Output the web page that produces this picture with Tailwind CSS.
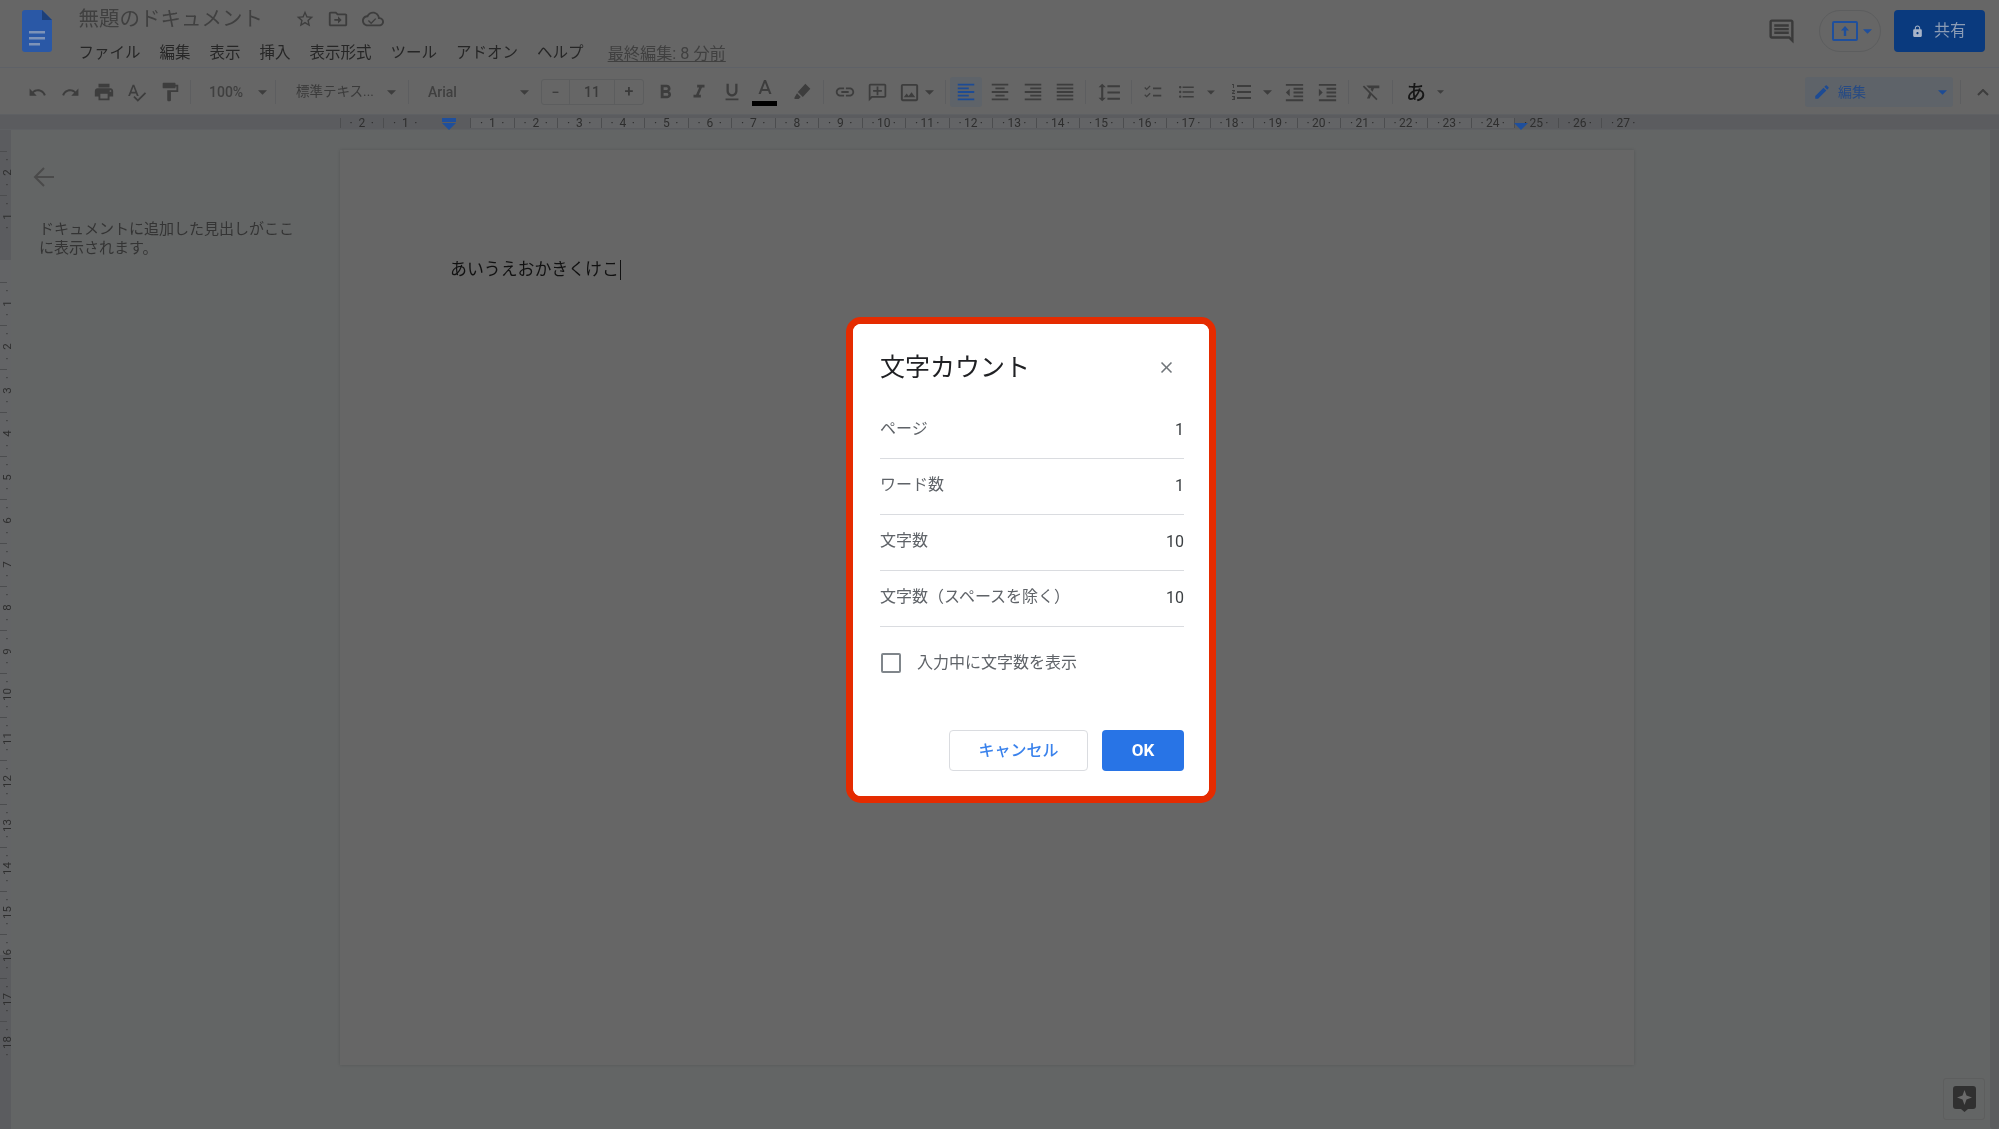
<!DOCTYPE html>
<html lang="ja">
<head>
<meta charset="utf-8">
<title>無題のドキュメント</title>
<script src="https://cdn.jsdelivr.net/npm/@tailwindcss/browser@4"></script>
</head>
<body class="m-0 overflow-hidden bg-[#636565]">
<div class="relative flex h-[1129px] w-[1999px] flex-col overflow-hidden bg-[#666666] font-['Roboto','Noto_Sans_CJK_JP',sans-serif] text-[#333333] blur-[0.4px]">

  <!-- Title bar -->
  <header class="flex h-[68px] shrink-0 items-start border-b border-[#5e6167]">
    <svg class="ml-[22px] mt-[10px] h-[42px] w-[30px] shrink-0" viewBox="0 0 30 42"><path fill="#2a58a6" d="M3 0h17l10 10v29a3 3 0 0 1-3 3H3a3 3 0 0 1-3-3V3a3 3 0 0 1 3-3z"/><path fill="#1d4079" d="M20 0l10 10H20z"/><path fill="#7d93b8" d="M7 21h16v2.4H7zm0 6h16v2.4H7zm0 6h11v2.4H7z"/></svg>
    <div class="ml-[26.5px] flex flex-col">
      <div class="flex h-[38px] items-center">
        <span class="text-[20.5px] leading-none text-[#404040]">無題のドキュメント</span>
        <svg class="ml-[31.5px] h-[20px] w-[20px]" viewBox="0 0 24 24" fill="#3d3d3d"><path d="M22 9.24l-7.19-.62L12 2 9.19 8.63 2 9.24l5.46 4.73L5.82 21 12 17.27 18.18 21l-1.63-7.03L22 9.24zM12 15.4l-3.76 2.27 1-4.28-3.32-2.88 4.38-.38L12 6.1l1.71 4.04 4.38.38-3.32 2.88 1 4.28L12 15.4z"/></svg>
        <svg class="ml-[12px] h-[22px] w-[22px]" viewBox="0 0 24 24" fill="#3d3d3d"><path d="M20 6h-8l-2-2H4c-1.1 0-2 .9-2 2v12c0 1.1.9 2 2 2h16c1.1 0 2-.9 2-2V8c0-1.1-.9-2-2-2zm0 12H4V6h5.17l2 2H20v10zm-8-1l4-4-4-4v3H8v2h4v3z"/></svg>
        <svg class="ml-[13px] h-[22px] w-[22px]" viewBox="0 0 24 24" fill="#3d3d3d"><path d="M19.35 10.04C18.67 6.59 15.64 4 12 4 9.11 4 6.6 5.64 5.35 8.04 2.34 8.36 0 10.91 0 14c0 3.31 2.69 6 6 6h13c2.76 0 5-2.24 5-5 0-2.64-2.05-4.78-4.65-4.96zM19 18H6c-2.21 0-4-1.79-4-4s1.79-4 4-4h.71C7.37 7.69 9.48 6 12 6c3.04 0 5.5 2.46 5.5 5.5v.5H19c1.66 0 3 1.34 3 3s-1.34 3-3 3zm-9-2.5l-2.5-2.5-1.06 1.06L10 17.62l5.5-5.5-1.06-1.06L10 15.5z"/></svg>
      </div>
      <nav class="mt-[6px] flex h-[20px] items-center gap-[19px] whitespace-nowrap text-[15.5px] leading-none text-[#262626]">
        <span>ファイル</span><span>編集</span><span>表示</span><span>挿入</span><span>表示形式</span><span>ツール</span><span>アドオン</span><span>ヘルプ</span>
        <span class="ml-[5px] text-[16.2px] text-[#404040] underline underline-offset-2">最終編集: 8 分前</span>
      </nav>
    </div>
    <div class="ml-auto mr-[14px] mt-[10px] flex items-center">
      <svg class="mr-[23px] h-[29px] w-[29px]" viewBox="0 0 24 24" fill="#3a3a3a"><path d="M21.99 4c0-1.1-.89-2-1.99-2H4c-1.1 0-2 .9-2 2v12c0 1.1.9 2 2 2h14l4 4-.01-18zM20 4v13.17L18.83 16H4V4h16zM6 12h12v2H6zm0-3h12v2H6zm0-3h12v2H6z"/></svg>
      <div class="mr-[13px] flex h-[42px] w-[62px] items-center rounded-full border border-[#5c5d5e] pl-[12px]">
        <svg class="h-[20px] w-[26px]" viewBox="0 0 26 20"><rect x="1" y="1" width="24" height="18" rx="1" fill="none" stroke="#1f4f9c" stroke-width="2"/><path fill="#1f4f9c" d="M13 5l4 4.5h-2.8V15h-2.4V9.5H9z"/></svg>
        <svg class="ml-[5px] h-[5px] w-[9px]" viewBox="0 0 10 5"><path fill="#1f4f9c" d="M0 0h10L5 5z"/></svg>
      </div>
      <div class="flex h-[42px] w-[91px] items-center rounded-[4px] bg-[#0a3a7e] pl-[17px] text-[16px] text-[#8c9cb5]">
        <svg class="h-[15px] w-[13px]" viewBox="0 0 24 24" fill="#a8b4c8"><path d="M18 8h-1V6c0-2.76-2.24-5-5-5S7 3.24 7 6v2H6c-1.1 0-2 .9-2 2v10c0 1.1.9 2 2 2h12c1.1 0 2-.9 2-2V10c0-1.1-.9-2-2-2zm-6 9c-1.1 0-2-.9-2-2s.9-2 2-2 2 .9 2 2-.9 2-2 2zm3.1-9H8.9V6c0-1.71 1.39-3.1 3.1-3.1 1.71 0 3.1 1.39 3.1 3.1v2z"/></svg>
        <span class="ml-[10px]">共有</span>
      </div>
    </div>
  </header>

  <!-- Toolbar -->
  <div class="flex h-[46px] shrink-0 items-center pl-[21px] pt-[2px] text-[14px] font-medium leading-none text-[#3a3a3a] [&>i]:mx-[4px] [&>i]:h-[24px] [&>i]:w-px [&>i]:shrink-0 [&>i]:bg-[#5d5e60] [&>span]:flex [&>span]:h-[30px] [&>span]:w-[33px] [&>span]:shrink-0 [&>span]:items-center [&>span]:justify-center [&_svg]:fill-[#3d3d3d]">
    <span><svg class="h-[19px] w-[19px]" viewBox="0 0 24 24"><path d="M12.5 8c-2.65 0-5.05.99-6.9 2.6L2 7v9h9l-3.62-3.62c1.39-1.16 3.16-1.88 5.12-1.88 3.54 0 6.55 2.31 7.6 5.5l2.37-.78C21.08 11.03 17.15 8 12.5 8z"/></svg></span>
    <span><svg class="h-[19px] w-[19px]" viewBox="0 0 24 24"><path d="M18.4 10.6C16.55 8.99 14.15 8 11.5 8c-4.65 0-8.58 3.03-9.96 7.22L3.9 16c1.05-3.19 4.05-5.5 7.6-5.5 1.95 0 3.73.72 5.12 1.88L13 16h9V7l-3.6 3.6z"/></svg></span>
    <span><svg class="h-[22px] w-[22px]" viewBox="0 0 24 24"><path d="M19 8H5c-1.66 0-3 1.34-3 3v6h4v4h12v-4h4v-6c0-1.66-1.34-3-3-3zm-3 11H8v-5h8v5zm3-7c-.55 0-1-.45-1-1s.45-1 1-1 1 .45 1 1-.45 1-1 1zm-1-9H6v4h12V3z"/></svg></span>
    <span><svg class="h-[21px] w-[21px]" viewBox="0 0 24 24"><path d="M12.45 16h2.09L9.43 3H7.57L2.46 16h2.09l1.12-3h5.64l1.14 3zm-6.02-5L8.5 5.48 10.57 11H6.43zm15.16.59l-8.09 8.09L9.83 16l-1.41 1.41 5.09 5.09L23 13l-1.41-1.41z"/></svg></span>
    <span><svg class="h-[22px] w-[22px]" viewBox="0 0 24 24"><path d="M18 4V3c0-.55-.45-1-1-1H5c-.55 0-1 .45-1 1v4c0 .55.45 1 1 1h12c.55 0 1-.45 1-1V6h1v4H9v11c0 .55.45 1 1 1h2c.55 0 1-.45 1-1v-9h8V4h-3z"/></svg></span>
    <i></i>
    <div class="flex w-[76px] shrink-0 items-center pl-[14px]"><span class="text-[#3f3f3f]">100%</span><svg class="ml-[15px] h-[5px] w-[9px]" viewBox="0 0 10 5"><path d="M0 0h10L5 5z"/></svg></div>
    <i></i>
    <div class="flex w-[124px] shrink-0 items-center pl-[16px]"><span class="whitespace-nowrap text-[13.5px] font-normal text-[#3a3a3a]">標準テキス...</span><svg class="ml-auto mr-[8px] h-[5px] w-[9px]" viewBox="0 0 10 5"><path d="M0 0h10L5 5z"/></svg></div>
    <i></i>
    <div class="flex w-[128px] shrink-0 items-center pl-[15px]"><span class="text-[#3f3f3f]">Arial</span><svg class="ml-auto mr-[12px] h-[5px] w-[9px]" viewBox="0 0 10 5"><path d="M0 0h10L5 5z"/></svg></div>
    <div class="flex h-[26px] w-[103px] shrink-0 items-center rounded-[3px] border border-[#5c5d5e] text-center text-[14px]">
      <div class="w-[27px]">−</div><div class="h-full w-[46px] border-x border-[#5c5d5e] leading-[24px]">11</div><div class="w-[28px] text-[16px]">+</div>
    </div>
    <span class="ml-[5px]"><svg class="h-[23px] w-[23px]" viewBox="0 0 24 24"><path d="M15.6 10.79c.97-.67 1.65-1.77 1.65-2.79 0-2.26-1.75-4-4-4H7v14h7.04c2.09 0 3.71-1.7 3.71-3.79 0-1.52-.86-2.82-2.15-3.42zM10 6.5h3c.83 0 1.5.67 1.5 1.5s-.67 1.5-1.5 1.5h-3v-3zm3.5 9H10v-3h3.5c.83 0 1.5.67 1.5 1.5s-.67 1.5-1.5 1.5z"/></svg></span>
    <span><svg class="h-[22px] w-[22px]" viewBox="0 0 24 24"><path d="M10 4v3h2.21l-3.42 8H6v3h8v-3h-2.21l3.42-8H18V4z"/></svg></span>
    <span><svg class="h-[22px] w-[22px]" viewBox="0 0 24 24"><path d="M12 17c3.31 0 6-2.69 6-6V3h-2.5v8c0 1.93-1.57 3.5-3.5 3.5S8.5 12.93 8.5 11V3H6v8c0 3.31 2.69 6 6 6zm-7 2v2h14v-2H5z"/></svg></span>
    <span class="relative"><svg class="mb-[7px] h-[24px] w-[24px]" viewBox="0 0 24 24"><path d="M11 3L5.5 17h2.25l1.12-3h6.25l1.12 3h2.25L13 3h-2zm-1.38 9L12 5.67 14.38 12H9.62z"/></svg><b class="absolute bottom-[1px] left-[4px] h-[5px] w-[25px] bg-black"></b></span>
    <span class="ml-[4px]"><svg class="h-[20px] w-[20px]" viewBox="0 0 24 24"><path d="M16 2l6 6-9 10-6-6zM6 13.5l4.5 4.5-2.5 2.5H3v-2z"/></svg></span>
    <i class="!ml-[5px]"></i>
    <span><svg class="h-[22px] w-[22px]" viewBox="0 0 24 24"><path d="M3.9 12c0-1.71 1.39-3.1 3.1-3.1h4V7H7c-2.76 0-5 2.24-5 5s2.24 5 5 5h4v-1.9H7c-1.71 0-3.1-1.39-3.1-3.1zM8 13h8v-2H8v2zm9-6h-4v1.9h4c1.71 0 3.1 1.39 3.1 3.1s-1.39 3.1-3.1 3.1h-4V17h4c2.76 0 5-2.24 5-5s-2.24-5-5-5z"/></svg></span>
    <span><svg class="h-[21px] w-[21px] -scale-x-100" viewBox="0 0 24 24"><path d="M22 4c0-1.1-.9-2-2-2H4c-1.1 0-2 .9-2 2v12c0 1.1.9 2 2 2h14l4 4V4zm-2 13.17L18.83 16H4V4h16v13.17zM13 5h-2v4H7v2h4v4h2v-4h4V9h-4z"/></svg></span>
    <div class="flex w-[45px] shrink-0 items-center pl-[4px]"><svg class="h-[23px] w-[23px]" viewBox="0 0 24 24"><path d="M19 5v14H5V5h14m0-2H5c-1.1 0-2 .9-2 2v14c0 1.1.9 2 2 2h14c1.1 0 2-.9 2-2V5c0-1.1-.9-2-2-2zm-4.86 8.86l-3 3.87L9 13.14 6 17h12l-3.86-5.14z"/></svg><svg class="ml-[4px] h-[5px] w-[9px]" viewBox="0 0 10 5"><path d="M0 0h10L5 5z"/></svg></div>
    <i class="!ml-[6px]"></i>
    <span class="!w-[32px] rounded-[3px] bg-[#5e6369]"><svg class="!fill-[#1d4b94] h-[22px] w-[22px]" viewBox="0 0 24 24"><path d="M15 15H3v2h12v-2zm0-8H3v2h12V7zM3 13h18v-2H3v2zm0 8h18v-2H3v2zM3 3v2h18V3H3z"/></svg></span>
    <span class="ml-[1px]"><svg class="h-[22px] w-[22px]" viewBox="0 0 24 24"><path d="M7 15v2h10v-2H7zm-4 6h18v-2H3v2zm0-8h18v-2H3v2zm4-6v2h10V7H7zM3 3v2h18V3H3z"/></svg></span>
    <span><svg class="h-[22px] w-[22px]" viewBox="0 0 24 24"><path d="M3 21h18v-2H3v2zm6-4h12v-2H9v2zm-6-4h18v-2H3v2zm6-4h12V7H9v2zM3 3v2h18V3H3z"/></svg></span>
    <span class="-ml-[1px]"><svg class="h-[22px] w-[22px]" viewBox="0 0 24 24"><path d="M3 21h18v-2H3v2zm0-4h18v-2H3v2zm0-4h18v-2H3v2zm0-4h18V7H3v2zm0-6v2h18V3H3z"/></svg></span>
    <i></i>
    <span class="ml-[3px]"><svg class="h-[25px] w-[25px]" viewBox="0 0 24 24"><path d="M6 7h2.500L5 3.500 1.500 7H4v10H1.500L5 20.500 8.500 17H6V7zm4-2v2h12V5H10zm0 14h12v-2H10v2zm0-6h12v-2H10v2z"/></svg></span>
    <i class="!ml-[5px]"></i>
    <span><svg class="h-[22px] w-[22px]" viewBox="0 0 24 24"><path d="M3.500 6.500l1.600 1.600L8.400 4.800l1 1-4.300 4.300L2.500 7.500zM3.500 14.500l1.600 1.600 3.300-3.300 1 1-4.300 4.300-2.600-2.600zM12 7h9v2h-9zM12 15h9v2h-9z"/></svg></span>
    <div class="ml-[2px] flex w-[44px] shrink-0 items-center pl-[6px]"><svg class="h-[22px] w-[22px]" viewBox="0 0 24 24"><path d="M4 10.500c-.83 0-1.500.67-1.500 1.500s.67 1.500 1.500 1.500 1.500-.67 1.500-1.500-.67-1.500-1.500-1.500zm0-6c-.83 0-1.500.67-1.500 1.500S3.170 7.500 4 7.500 5.500 6.830 5.500 6 4.830 4.500 4 4.500zm0 12c-.83 0-1.500.68-1.500 1.500s.68 1.500 1.500 1.500 1.500-.68 1.500-1.500-.67-1.500-1.500-1.500zM7 19h14v-2H7v2zm0-6h14v-2H7v2zm0-8v2h14V5H7z"/></svg><svg class="ml-[11px] h-[5px] w-[9px]" viewBox="0 0 10 5"><path d="M0 0h10L5 5z"/></svg></div>
    <div class="ml-[15px] flex w-[44px] shrink-0 items-center"><svg class="h-[24px] w-[24px]" viewBox="0 0 24 24"><path d="M2 17h2v.5H3v1h1v.5H2v1h3v-4H2v1zm1-9h1V4H2v1h1v3zm-1 3h1.800L2 13.100v.900h3v-1H3.200L5 10.900V10H2v1zm5-6v2h14V5H7zm0 14h14v-2H7v2zm0-6h14v-2H7v2z"/></svg><svg class="ml-[9px] h-[5px] w-[9px]" viewBox="0 0 10 5"><path d="M0 0h10L5 5z"/></svg></div>
    <span class="ml-[4px]"><svg class="h-[23px] w-[23px]" viewBox="0 0 24 24"><path d="M11 17h10v-2H11v2zm-8-5l4 4V8l-4 4zm0 9h18v-2H3v2zM3 3v2h18V3H3zm8 6h10V7H11v2zm0 4h10v-2H11v2z"/></svg></span>
    <span><svg class="h-[23px] w-[23px]" viewBox="0 0 24 24"><path d="M3 21h18v-2H3v2zM3 8v8l4-4-4-4zm8 9h10v-2H11v2zM3 3v2h18V3H3zm8 6h10V7H11v2zm0 4h10v-2H11v2z"/></svg></span>
    <i></i>
    <span class="ml-[2px]"><svg class="h-[22px] w-[22px]" viewBox="0 0 24 24"><path d="M3.270 5L2 6.270l6.970 6.970L6.500 19h3l1.570-3.660L16.730 21 18 19.730 3.550 5.270 3.270 5zM6 5v.180L8.820 8h2.400l-.720 1.680 2.100 2.100L14.210 8H20V5H6z"/></svg></span>
    <i class="!ml-[4px]"></i>
    <div class="flex w-[54px] shrink-0 items-center pl-[9px]"><b class="font-['Noto_Sans_CJK_JP',sans-serif] text-[20px] font-medium text-[#161616]">あ</b><svg class="ml-[11px] h-[4px] w-[7px]" viewBox="0 0 10 5"><path d="M0 0h10L5 5z"/></svg></div>

    <div class="ml-auto flex h-[30px] w-[148px] shrink-0 items-center rounded-[3px] bg-[#5e6369] pl-[8px] font-normal text-[#254a85]">
      <svg class="!fill-[#1d4b94] h-[18px] w-[18px]" viewBox="0 0 24 24"><path d="M3 17.250V21h3.750L17.810 9.940l-3.750-3.750L3 17.250zM20.710 7.040c.39-.39.39-1.020 0-1.410l-2.340-2.340a.996.996 0 0 0-1.410 0l-1.830 1.830 3.750 3.750 1.830-1.830z"/></svg>
      <b class="ml-[7px] text-[14px] font-normal">編集</b>
      <svg class="!fill-[#1d4b94] ml-auto mr-[6px] h-[5px] w-[9px]" viewBox="0 0 10 5"><path d="M0 0h10L5 5z"/></svg>
    </div>
    <i class="!ml-[7px] !mr-0"></i>
    <svg class="ml-[16px] mr-[10px] h-[7px] w-[12px] !fill-none" viewBox="0 0 12 7"><path d="M1 6l5-5 5 5" fill="none" stroke="#3d3d3d" stroke-width="2"/></svg>
  </div>

  <!-- Horizontal ruler -->
  <div class="relative flex h-[16px] shrink-0 items-center border-y border-[#5e6063] bg-[#5b5c5f] pl-[339.5px] pt-[1px] text-[12px] leading-none text-[#2e2e2e] [&_i]:not-italic [&>span]:flex [&>span]:h-[10px] [&>span]:w-[43.5px] [&>span]:shrink-0 [&>span]:items-center [&>span]:justify-between [&>span]:border-l [&>span]:border-[#4c4d4f] [&>span]:px-[9px] [&>span:nth-child(n+4):nth-child(-n+27)]:bg-[#636466]">
    <span><i>·</i>2<i>·</i></span><span><i>·</i>1<i>·</i></span><span class="!border-transparent"></span>
    <span><i>·</i>1<i>·</i></span><span><i>·</i>2<i>·</i></span><span><i>·</i>3<i>·</i></span><span><i>·</i>4<i>·</i></span><span><i>·</i>5<i>·</i></span><span><i>·</i>6<i>·</i></span><span><i>·</i>7<i>·</i></span><span><i>·</i>8<i>·</i></span><span><i>·</i>9<i>·</i></span><span><i>·</i>10<i>·</i></span><span><i>·</i>11<i>·</i></span><span><i>·</i>12<i>·</i></span><span><i>·</i>13<i>·</i></span><span><i>·</i>14<i>·</i></span><span><i>·</i>15<i>·</i></span><span><i>·</i>16<i>·</i></span><span><i>·</i>17<i>·</i></span><span><i>·</i>18<i>·</i></span><span><i>·</i>19<i>·</i></span><span><i>·</i>20<i>·</i></span><span><i>·</i>21<i>·</i></span><span><i>·</i>22<i>·</i></span><span><i>·</i>23<i>·</i></span><span><i>·</i>24<i>·</i></span><span><i>·</i>25<i>·</i></span><span><i>·</i>26<i>·</i></span><span><i>·</i>27<i>·</i></span>
    <svg class="absolute left-[441px] top-[3px] h-[12px] w-[16px]" viewBox="0 0 16 12"><path fill="#1f4f9c" d="M1 0h14v4H1zM1 5h14l-7 7z"/></svg>
    <svg class="absolute left-[1514px] top-[8px] h-[7px] w-[14px]" viewBox="0 0 14 7"><path fill="#1f4f9c" d="M0 0h14l-7 7z"/></svg>
  </div>

  <!-- Canvas -->
  <div class="flex min-h-0 flex-1 bg-[#636565]">
    <div class="w-[11px] shrink-0 bg-[linear-gradient(#5b5c5f_130px,#636466_130px,#636466_825px,#5b5c5f_825px)]">
      <div class="mt-[21px] flex flex-col text-[11.5px] leading-[9px] text-[#2e2e2e] [&_b]:-rotate-90 [&_b]:font-normal [&_b]:whitespace-nowrap [&_i]:not-italic [&_i]:h-[9px] [&>span]:flex [&>span]:h-[43.5px] [&>span]:w-[14px] [&>span]:flex-col [&>span]:items-center [&>span]:justify-between [&>span]:bg-[linear-gradient(#4c4d4f,#4c4d4f)] [&>span]:bg-[length:7px_1px] [&>span]:bg-no-repeat [&>span]:py-[5px]">
        <span><i>·</i><b>2</b><i>·</i></span><span><i>·</i><b>1</b><i>·</i></span><span class="!bg-none"></span>
        <span><i>·</i><b>1</b><i>·</i></span><span><i>·</i><b>2</b><i>·</i></span><span><i>·</i><b>3</b><i>·</i></span><span><i>·</i><b>4</b><i>·</i></span><span><i>·</i><b>5</b><i>·</i></span><span><i>·</i><b>6</b><i>·</i></span><span><i>·</i><b>7</b><i>·</i></span><span><i>·</i><b>8</b><i>·</i></span><span><i>·</i><b>9</b><i>·</i></span><span><i>·</i><b>10</b><i>·</i></span><span><i>·</i><b>11</b><i>·</i></span><span><i>·</i><b>12</b><i>·</i></span><span><i>·</i><b>13</b><i>·</i></span><span><i>·</i><b>14</b><i>·</i></span><span><i>·</i><b>15</b><i>·</i></span><span><i>·</i><b>16</b><i>·</i></span><span><i>·</i><b>17</b><i>·</i></span><span><i>·</i><b>18</b><i>·</i></span>
      </div>
    </div>
    <aside class="w-[329px] shrink-0 pl-[22px] pt-[36px]">
      <svg class="h-[22px] w-[22px]" viewBox="0 0 22 22" fill="none" stroke="#4a4a4a" stroke-width="2"><path d="M21 11H3M11 2l-9 9 9 9"/></svg>
      <p class="ml-[6px] mt-[32px] w-[262px] text-[15px] leading-[19px] text-[#343434]">ドキュメントに追加した見出しがここに表示されます。</p>
    </aside>
    <main class="mt-[20px] h-[915px] w-[1294px] shrink-0 bg-[#666666] pl-[110px] pt-[108px] shadow-[0_0_3px_rgba(0,0,0,0.15)]">
      <p class="flex h-[24px] items-center text-[16.9px] text-[#111111]">あいうえおかきくけこ<b class="ml-[1px] h-[20px] w-px bg-[#111111]"></b></p>
    </main>
    <div class="relative flex-1">
      <div class="absolute bottom-[9px] right-[14px] flex h-[42px] w-[42px] items-center justify-center rounded-[3px] border border-[#5d5e5e]">
        <svg class="h-[26px] w-[23px]" viewBox="0 0 23 26"><path fill="#303030" d="M3 0h17a3 3 0 0 1 3 3v17a3 3 0 0 1-3 3h-5l-3.500 3L8 23H3a3 3 0 0 1-3-3V3a3 3 0 0 1 3-3z"/><path fill="#6a6a6a" d="M11.500 4l2 5.500 5.500 2-5.500 2-2 5.500-2-5.500-5.500-2 5.500-2z"/></svg>
      </div>
      <div class="absolute inset-y-0 right-0 w-[9px] rounded-b-[3px] bg-[#5b5c5e]"></div>
    </div>
  </div>

  <!-- Dialog -->
  <section class="absolute left-[846px] top-[317px] h-[486px] w-[370px] rounded-[15px] border-[7px] border-[#e52b00] bg-white text-[16px] text-[#5f6368]">
    <div class="h-full rounded-[8px] bg-white pl-[27px] pr-[25px]">
      <div class="flex h-[79px] items-start pt-[30px]">
        <h2 class="text-[25px] font-normal leading-[28px] text-[#202124]">文字カウント</h2>
        <svg class="ml-auto mr-[8px] mt-[4px] h-[19px] w-[19px]" viewBox="0 0 24 24" fill="#70757a"><path d="M19 6.410L17.590 5 12 10.590 6.410 5 5 6.410 10.590 12 5 17.590 6.410 19 12 13.410 17.590 19 19 17.590 13.410 12z"/></svg>
      </div>
      <div class="[&>div]:flex [&>div]:h-[56px] [&>div]:items-center [&>div]:justify-between [&>div]:border-b [&>div]:border-[#dadce0] [&_b]:-mt-[2px] [&_b]:font-normal [&_b]:text-[#3c4043] [&_span]:-mt-[4px]">
        <div><span>ページ</span><b>1</b></div>
        <div><span>ワード数</span><b>1</b></div>
        <div><span>文字数</span><b>10</b></div>
        <div><span>文字数（スペースを除く）</span><b>10</b></div>
      </div>
      <label class="mt-[26px] flex h-[20px] items-center">
        <span class="ml-[1px] h-[20px] w-[20px] rounded-[2px] border-2 border-[#80868b]"></span>
        <span class="ml-[16px]">入力中に文字数を表示</span>
      </label>
      <div class="mt-[57px] flex justify-end gap-[14px]">
        <button class="h-[41px] w-[139px] rounded-[4px] border border-[#dadce0] bg-white text-[16px] font-medium text-[#3a82ec]">キャンセル</button>
        <button class="h-[41px] w-[82px] rounded-[4px] bg-[#2874e6] text-[17px] font-bold text-white">OK</button>
      </div>
    </div>
  </section>
</div>
</body>
</html>
